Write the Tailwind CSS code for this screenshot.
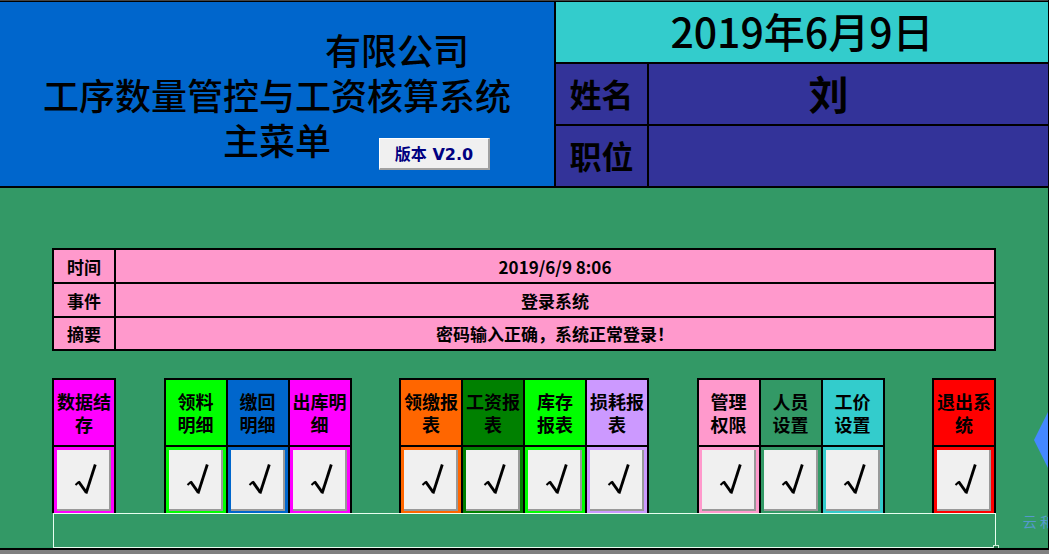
<!DOCTYPE html>
<html lang="zh-CN">
<head>
<meta charset="utf-8">
<meta name="viewport" content="width=device-width, initial-scale=1">
<title>工序数量管控与工资核算系统</title>
<script src="https://cdn.jsdelivr.net/npm/@tailwindcss/browser@4"></script>
</head>
<body class="relative flex min-h-screen flex-col overflow-x-hidden bg-[#808080] font-['Noto_Sans_CJK_SC',sans-serif] text-black">
<div class="relative flex flex-col overflow-hidden border-r border-b-2 border-black bg-[#339966]">
  <header class="grid grid-cols-[554fr_492fr] gap-0.5 border-t border-[#444] bg-black pt-px pb-0.5">
    <div class="relative flex flex-col items-center justify-center bg-[#0066cc] text-4xl leading-[45px] font-medium">
      <h1 class="flex flex-col items-center">
        <span class="ml-60">有限公司</span>
        <span>工序数量管控与工资核算系统</span>
        <span>主菜单</span>
      </h1>
      <button type="button" class="absolute right-16 bottom-4 h-8 w-[111px] border-r-2 border-b-2 border-t border-l border-t-white border-l-white border-r-[#a0a0a0] border-b-[#a0a0a0] bg-[#f0f0f0] pt-0.5 font-['DejaVu_Sans','Noto_Sans_CJK_SC',sans-serif] text-base leading-none font-bold text-[#000080]">版本 V2.0</button>
    </div>
    <div class="grid grid-cols-[91fr_399fr] grid-rows-[60px_60px_60px] gap-0.5">
      <div class="col-span-2 flex items-center justify-center bg-[#33cccc] pb-1 text-[41px] leading-none font-medium">2019年6月9日</div>
      <div class="flex items-center justify-center bg-[#333399] pb-0.5 text-[32px] leading-none font-bold">姓名</div>
      <div class="flex items-center justify-center bg-[#333399] pr-10 pb-0.5 text-[40px] leading-none font-bold">刘</div>
      <div class="flex items-center justify-center bg-[#333399] pb-0.5 text-[32px] leading-none font-bold">职位</div>
      <div class="bg-[#333399]"></div>
    </div>
  </header>

  <main class="px-[52px] pt-[60px]">
    <table class="w-full table-fixed border-collapse bg-[#ff99cc] text-center text-[17px] leading-none font-bold">
      <colgroup><col class="w-[62px]"><col></colgroup>
      <tbody>
        <tr class="h-[34px]"><th scope="row" class="border-2 border-black p-0">时间</th><td class="border-2 border-black p-0">2019/6/9 8:06</td></tr>
        <tr class="h-[34px]"><th scope="row" class="border-2 border-black p-0">事件</th><td class="border-2 border-black p-0">登录系统</td></tr>
        <tr class="h-[33px]"><th scope="row" class="border-2 border-black p-0">摘要</th><td class="border-2 border-black p-0">密码输入正确，系统正常登录！</td></tr>
      </tbody>
    </table>

    <nav class="mt-[27px] flex justify-between text-center text-lg leading-[23px] font-bold" id="menu"></nav>
    <div class="relative ml-px h-[35px] border border-[#e8fff0]">
      <span class="absolute -right-1 -bottom-1 size-[6px] border border-[#c8f0d8] bg-[#217346]"></span>
    </div>
  </main>

  <svg class="absolute top-[400px] right-[-46px] h-20 w-[60px]" viewBox="0 0 60 80" aria-hidden="true"><path d="M20 0H40L60 40 40 80H20L0 40Z" fill="#4488ff"/></svg>
  <span class="absolute top-[511px] right-[-6px] text-sm leading-5 whitespace-nowrap text-[#5599cc]">云 和</span>
</div>
<script>
const groups = [
  [['数据结存', 'bg-[#ff00ff]']],
  [['领料明细', 'bg-[#00ff00]', 1], ['缴回明细', 'bg-[#0066cc]', 1], ['出库明细', 'bg-[#ff00ff]']],
  [['领缴报表', 'bg-[#ff6600]'], ['工资报表', 'bg-[#008000]'], ['库存报表', 'bg-[#00ff00]', 1], ['损耗报表', 'bg-[#cc99ff]']],
  [['管理权限', 'bg-[#ff99cc]', 1], ['人员设置', 'bg-[#339966]', 1], ['工价设置', 'bg-[#33cccc]', 1]],
  [['退出系统', 'bg-[#ff0000]']]
];
let n = 0;
document.getElementById('menu').innerHTML = groups.map(g =>
  '<div class="flex gap-0.5 bg-black px-0.5 pt-0.5">' + g.map(([t, c, even]) => {
    const id = 'action-' + (++n), at = even ? 2 : 3;
    return `<div class="flex w-[60px] flex-col gap-0.5">
      <label for="${id}" class="flex h-[65px] items-center justify-center whitespace-nowrap ${c}"><span>${t.slice(0, at)}<br>${t.slice(at)}</span></label>
      <div class="flex h-[66px] px-0.5 pt-0.5 pb-px ${c}"><button type="button" id="${id}" class="m-px flex flex-1 items-center justify-center border-r-2 border-b-2 border-r-[#999] border-b-[#999] bg-[#f0f0f0] pb-0.5 pl-1.5"><svg class="h-8 w-6" viewBox="0 0 24 32" fill="none" stroke="#000" aria-hidden="true"><path d="M1.5 22 5 18.8" stroke-width="2"/><path d="M4.5 18.5 12 29" stroke-width="3"/><path d="M12 30.5 21.3 1.5" stroke-width="2.8"/></svg></button></div>
    </div>`;
  }).join('') + '</div>').join('');
</script>
</body>
</html>
